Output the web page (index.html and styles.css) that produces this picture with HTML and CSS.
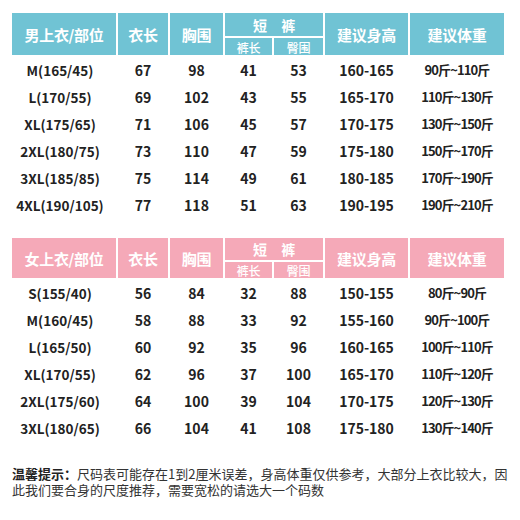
FILE: index.html
```html
<!DOCTYPE html>
<html lang="zh">
<head>
<meta charset="utf-8">
<link rel="stylesheet" href="styles.css">
</head>
<body>
<div class="page">
  <section class="chart blue">
    <div class="head">
      <div class="h c1">男上衣/部位</div>
      <div class="h c2">衣长</div>
      <div class="h c3">胸围</div>
      <div class="h grp">短&nbsp;&nbsp;&nbsp;&nbsp;&nbsp;裤</div>
      <div class="h sub s1">裤长</div>
      <div class="h sub s2">臀围</div>
      <div class="h c6">建议身高</div>
      <div class="h c7">建议体重</div>
    </div>
    <div class="rows">
      <div class="row"><span class="size">M(165/45)</span><span>67</span><span>98</span><span>41</span><span>53</span><span>160-165</span><span class="wt">90斤~110斤</span></div>
      <div class="row"><span class="size">L(170/55)</span><span>69</span><span>102</span><span>43</span><span>55</span><span>165-170</span><span class="wt">110斤~130斤</span></div>
      <div class="row"><span class="size">XL(175/65)</span><span>71</span><span>106</span><span>45</span><span>57</span><span>170-175</span><span class="wt">130斤~150斤</span></div>
      <div class="row"><span class="size">2XL(180/75)</span><span>73</span><span>110</span><span>47</span><span>59</span><span>175-180</span><span class="wt">150斤~170斤</span></div>
      <div class="row"><span class="size">3XL(185/85)</span><span>75</span><span>114</span><span>49</span><span>61</span><span>180-185</span><span class="wt">170斤~190斤</span></div>
      <div class="row"><span class="size">4XL(190/105)</span><span>77</span><span>118</span><span>51</span><span>63</span><span>190-195</span><span class="wt">190斤~210斤</span></div>
    </div>
  </section>

  <section class="chart pink">
    <div class="head">
      <div class="h c1">女上衣/部位</div>
      <div class="h c2">衣长</div>
      <div class="h c3">胸围</div>
      <div class="h grp">短&nbsp;&nbsp;&nbsp;&nbsp;&nbsp;裤</div>
      <div class="h sub s1">裤长</div>
      <div class="h sub s2">臀围</div>
      <div class="h c6">建议身高</div>
      <div class="h c7">建议体重</div>
    </div>
    <div class="rows">
      <div class="row"><span class="size">S(155/40)</span><span>56</span><span>84</span><span>32</span><span>88</span><span>150-155</span><span class="wt">80斤~90斤</span></div>
      <div class="row"><span class="size">M(160/45)</span><span>58</span><span>88</span><span>33</span><span>92</span><span>155-160</span><span class="wt">90斤~100斤</span></div>
      <div class="row"><span class="size">L(165/50)</span><span>60</span><span>92</span><span>35</span><span>96</span><span>160-165</span><span class="wt">100斤~110斤</span></div>
      <div class="row"><span class="size">XL(170/55)</span><span>62</span><span>96</span><span>37</span><span>100</span><span>165-170</span><span class="wt">110斤~120斤</span></div>
      <div class="row"><span class="size">2XL(175/60)</span><span>64</span><span>100</span><span>39</span><span>104</span><span>170-175</span><span class="wt">120斤~130斤</span></div>
      <div class="row"><span class="size">3XL(180/65)</span><span>66</span><span>104</span><span>41</span><span>108</span><span>175-180</span><span class="wt">130斤~140斤</span></div>
    </div>
  </section>

  <p class="note"><b>温馨提示：</b>尺码表可能存在1到2厘米误差，身高体重仅供参考，大部分上衣比较大，因此我们要合身的尺度推荐，需要宽松的请选大一个码数</p>
</div>
</body>
</html>
```

FILE: styles.css
```css
html, body {
  margin: 0;
  padding: 0;
  background: #ffffff;
}

body {
  font-family: "Noto Sans CJK SC", "Noto Sans", sans-serif;
  color: #222;
}

.page {
  padding: 13px 16px 0 12px;
}

.head,
.row {
  display: grid;
  grid-template-columns: 104px 50px 53px 47px 49px 83px 94px;
  column-gap: 2px;
}

.head {
  grid-template-rows: 23px 17px;
  row-gap: 2px;
}

.pink .head {
  grid-template-rows: 22px 16px;
}

.h {
  color: #fff;
  font-weight: 700;
  font-size: 15px;
  display: flex;
  align-items: center;
  justify-content: center;
  letter-spacing: -0.3px;
}

.blue .h { background: #70c3d4; }
.pink .h { background: #f5a9b8; }

.c1 { grid-column: 1; grid-row: 1 / 3; }
.c2 { grid-column: 2; grid-row: 1 / 3; }
.c3 { grid-column: 3; grid-row: 1 / 3; }
.grp { grid-column: 4 / 6; grid-row: 1; font-size: 14px; }
.s1 { grid-column: 4; grid-row: 2; }
.s2 { grid-column: 5; grid-row: 2; }
.c6 { grid-column: 6; grid-row: 1 / 3; }
.c7 { grid-column: 7; grid-row: 1 / 3; }

.sub {
  font-size: 12px;
  font-weight: 500;
  padding-top: 1px;
}

.rows {
  padding-top: 1px;
}

.row {
  height: 27px;
  align-items: center;
  font-size: 14px;
  font-weight: 600;
}

.row span {
  text-align: center;
}

.row .size {
  padding-right: 8px;
  font-size: 13.5px;
}

.row .wt {
  font-size: 13px;
  letter-spacing: -0.9px;
}

.pink {
  margin-top: 20px;
}

.note {
  margin: 25px -8px 0 0;
  font-size: 13px;
  line-height: 16px;
  color: #333;
}

.note b {
  font-weight: 700;
  color: #222;
}
```
